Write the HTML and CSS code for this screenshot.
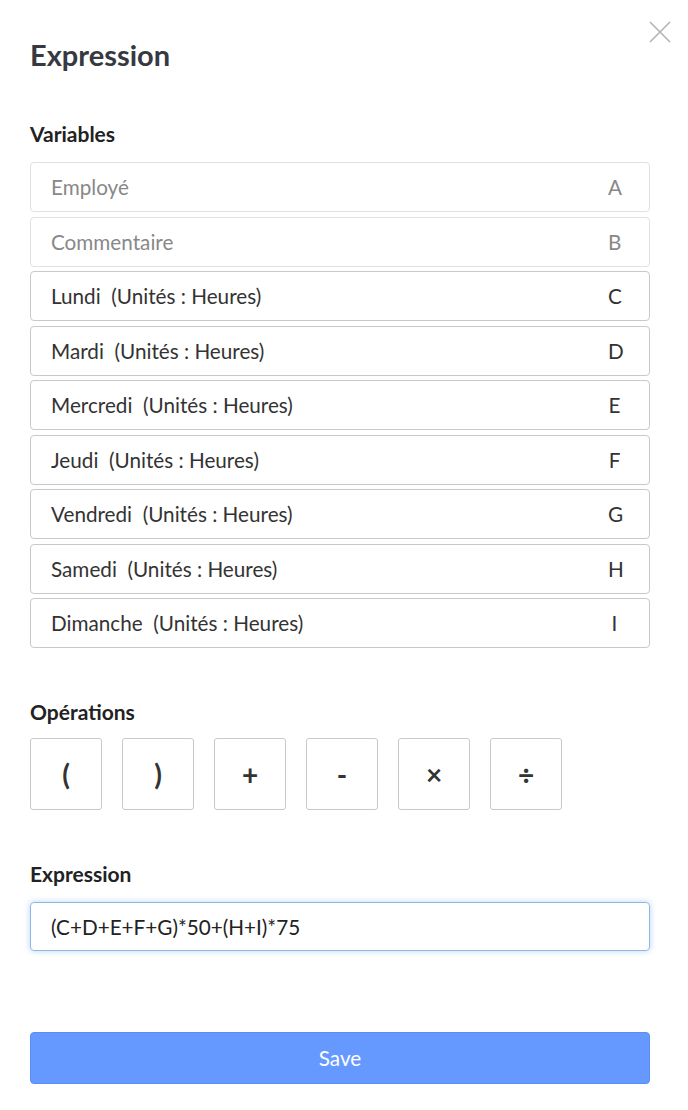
FILE: index.html
```html
<!DOCTYPE html>
<html>
<head>
<meta charset="utf-8">
<link rel="stylesheet" href="styles.css">
</head>
<body>
<div class="modal">
  <button class="close" aria-label="Close">
    <svg width="22" height="22" viewBox="0 0 22 22"><path d="M1 1L21 21M21 1L1 21" stroke="#b3b3b3" stroke-width="1.6" fill="none"/></svg>
  </button>
  <h1 class="title">Expression</h1>

  <h2 class="label label-vars">Variables</h2>
  <div class="vars">
    <div class="var disabled"><span>Employé</span><span class="letter">A</span></div>
    <div class="var disabled"><span>Commentaire</span><span class="letter">B</span></div>
    <div class="var"><span>Lundi&nbsp; (Unités : Heures)</span><span class="letter">C</span></div>
    <div class="var"><span>Mardi&nbsp; (Unités : Heures)</span><span class="letter">D</span></div>
    <div class="var"><span>Mercredi&nbsp; (Unités : Heures)</span><span class="letter">E</span></div>
    <div class="var"><span>Jeudi&nbsp; (Unités : Heures)</span><span class="letter">F</span></div>
    <div class="var"><span>Vendredi&nbsp; (Unités : Heures)</span><span class="letter">G</span></div>
    <div class="var"><span>Samedi&nbsp; (Unités : Heures)</span><span class="letter">H</span></div>
    <div class="var"><span>Dimanche&nbsp; (Unités : Heures)</span><span class="letter">I</span></div>
  </div>

  <h2 class="label label-ops">Opérations</h2>
  <div class="ops">
    <button class="op">(</button>
    <button class="op">)</button>
    <button class="op">+</button>
    <button class="op">-</button>
    <button class="op">×</button>
    <button class="op">÷</button>
  </div>

  <h2 class="label label-expr">Expression</h2>
  <div class="expr">(C+D+E+F+G)*50+(H+I)*75</div>

  <button class="save">Save</button>
</div>
</body>
</html>
```
FILE: styles.css
```css
* { box-sizing: border-box; }
html, body { margin: 0; padding: 0; background: #fff; }
body { font-family: Lato, "Noto Sans", sans-serif; color: #333; }
.modal { position: relative; width: 688px; height: 1110px; padding: 0 38px 0 30px; }
.close { position: absolute; top: 21px; right: 17px; border: 0; background: none; padding: 0; width: 22px; height: 22px; cursor: pointer; }
.close svg { display: block; }
.title { margin: 0; padding-top: 37px; font-size: 29px; line-height: 36px; font-weight: 700; color: #363940; }
.label { margin: 0; font-size: 21px; font-weight: 700; line-height: 24px; color: #222; }
.label-vars { margin-top: 49px; }
.vars { margin-top: 16px; display: flex; flex-direction: column; gap: 4.5px; }
.var { height: 50px; border: 1px solid #c9c9c9; border-radius: 4px; display: flex; align-items: center; justify-content: space-between; padding: 0 28px 0 20px; font-size: 20.7px; color: #333; }
.var.disabled { border-color: #e1e1e1; color: #888; }
.letter { display: inline-block; width: 13px; text-align: center; }
.label-ops { margin-top: 52px; }
.ops { margin-top: 14px; display: flex; gap: 20px; }
.op { width: 72px; height: 72px; border: 1px solid #c9c9c9; border-radius: 3px; background: #fff; font-family: Lato, "Noto Sans", sans-serif; font-size: 28px; font-weight: 700; color: #333; padding: 0; }
.label-expr { margin-top: 52px; }
.expr { margin-top: 16px; height: 49px; border: 1px solid #8db8e6; border-radius: 4px; box-shadow: 0 0 6px rgba(102, 160, 230, 0.45); display: flex; align-items: center; padding: 0 20px; font-size: 20.7px; color: #222; }
.save { display: block; margin-top: 81px; width: 100%; height: 52px; border: 1px solid #5a8ef0; border-radius: 4px; background: #6699ff; color: #fff; font-family: Lato, "Noto Sans", sans-serif; font-size: 20.7px; padding: 0; }
```
